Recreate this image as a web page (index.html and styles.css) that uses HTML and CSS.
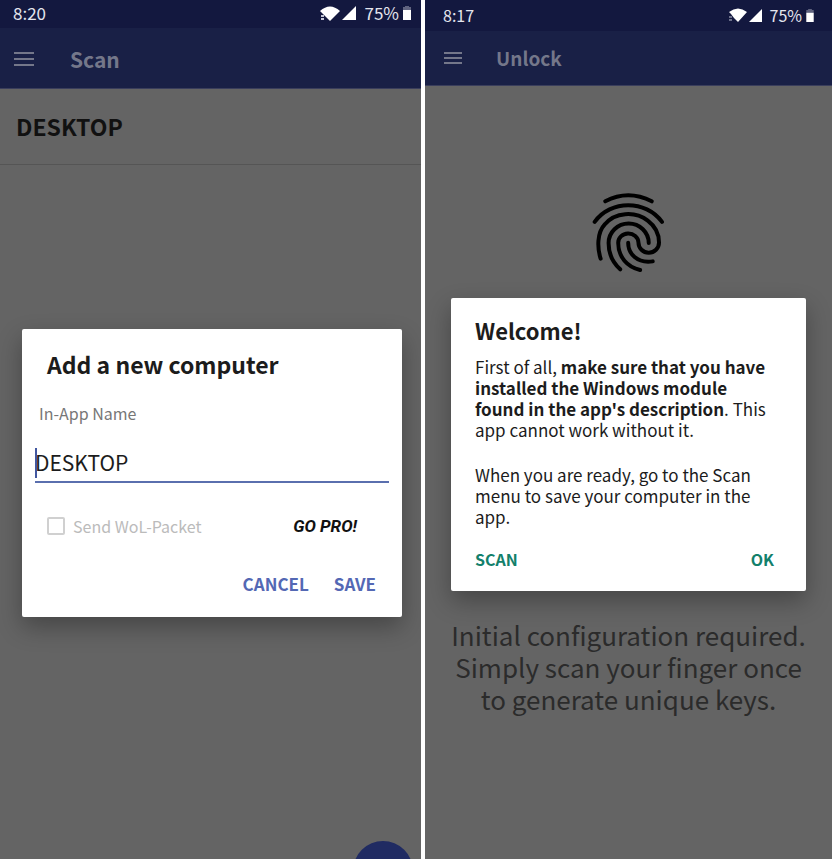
FILE: index.html
```html
<!DOCTYPE html>
<html lang="en">
<head>
  <meta charset="utf-8">
  <meta name="viewport" content="width=device-width, initial-scale=1.0">
  <title>Remote Fingerprint Unlock</title>
  <link rel="stylesheet" href="styles.css">
</head>
<body>
  <div class="screens">

    <!-- Scan screen -->
    <section class="phone phone-scan">
      <div class="status-bar">
        <span class="clock">8:20</span>
        <svg class="wifi" viewBox="0 0 20 15" width="20" height="15">
          <path d="M0 5Q10 -4 20 5L10 15L5 10L2 7Z" fill="#fff"/>
          <path d="M1 10h3M1 13h3" stroke="#c4c6d6" stroke-width="2"/>
        </svg>
        <svg class="signal" viewBox="0 0 14 14" width="14" height="14"><path d="M14 0V14H0Z" fill="#fff"/></svg>
        <span class="percent">75%</span>
        <svg class="battery" viewBox="0 0 8 14" width="8" height="14">
          <path d="M2 0H6V1H8V4H0V1H2Z" fill="#60637f"/>
          <path d="M0 4H8V14H0Z" fill="#fff"/>
        </svg>
      </div>
      <header class="app-bar">
        <button class="menu-button" aria-label="Menu">
          <svg viewBox="0 0 20 14" width="20" height="14"><path d="M0 1H20M0 7H20M0 13H20" stroke="currentColor" stroke-width="2"/></svg>
        </button>
        <h1>Scan</h1>
      </header>
      <div class="computer">DESKTOP</div>
      <button class="fab" aria-label="Add"></button>

      <div class="overlay">
        <form class="dialog add-dialog">
          <h2>Add a new computer</h2>
          <label class="name-label" for="name">In-App Name</label>
          <div class="name-field">
            <input type="text" id="name" value="DESKTOP">
            <span class="caret"></span>
          </div>
          <div class="options">
            <input type="checkbox" id="wol" disabled>
            <label for="wol">Send WoL-Packet</label>
            <button type="button" class="go-pro">GO PRO!</button>
          </div>
          <div class="actions">
            <button type="button">CANCEL</button>
            <button type="button">SAVE</button>
          </div>
        </form>
      </div>
    </section>

    <!-- Unlock screen -->
    <section class="phone phone-unlock">
      <div class="status-bar">
        <span class="clock">8:17</span>
        <svg class="wifi" viewBox="0 0 18 14" width="18" height="14">
          <path d="M0 4Q9 -3 18 4L9 14L5 10L2 6Z" fill="#fff"/>
          <path d="M0 9h3M0 12h3" stroke="#c4c6d6" stroke-width="1"/>
        </svg>
        <svg class="signal" viewBox="0 0 14 14" width="13" height="13"><path d="M14 0V14H0Z" fill="#fff"/></svg>
        <span class="percent">75%</span>
        <svg class="battery" viewBox="0 0 8 14" width="8" height="13">
          <path d="M2 0H6V1H8V4H0V1H2Z" fill="#60637f"/>
          <path d="M0 4H8V14H0Z" fill="#fff"/>
        </svg>
      </div>
      <header class="app-bar">
        <button class="menu-button" aria-label="Menu">
          <svg viewBox="0 0 18 12" width="18" height="12"><path d="M0 1H18M0 6H18M0 11H18" stroke="currentColor" stroke-width="2"/></svg>
        </button>
        <h1>Unlock</h1>
      </header>
      <main class="unlock">
        <svg class="fingerprint" viewBox="36 36 220 244" width="73" height="81" fill="none" stroke="#000" stroke-width="12" stroke-linecap="round">
          <path d="M76 64Q145 28 216 64"/>
          <path d="M44 126C92 59 198 59 247 126"/>
          <path d="M62 237C52 205 50 160 75 133C105 97 165 92 204 122C228 140 238 165 238 188A31 31 0 0 1 176 188A30.500 28 0 0 0 115 190C115 232 143 262 181 271"/>
          <path d="M121 269C98 248 86 220 86 190A60.500 59 0 0 1 207 190"/>
          <path d="M145 189C145 222 172 252 219 245"/>
        </svg>
        <p>Initial configuration required.<br>Simply scan your finger once<br>to generate unique keys.</p>
      </main>

      <div class="overlay">
        <div class="dialog welcome-dialog">
          <h2>Welcome!</h2>
          <p>First of all, <b>make sure that you have<br>installed the Windows module<br>found in the app's description</b>. This<br>app cannot work without it.</p>
          <p>When you are ready, go to the Scan<br>menu to save your computer in the<br>app.</p>
          <div class="actions">
            <button type="button">SCAN</button>
            <button type="button">OK</button>
          </div>
        </div>
      </div>
    </section>

  </div>
</body>
</html>
```
FILE: styles.css
```css
* {
  box-sizing: border-box;
}

body {
  margin: 0;
  background-color: #fff;
  font-family: "Noto Sans CJK SC", "Noto Sans", sans-serif;
}

h1, h2, p {
  margin: 0;
}

button {
  padding: 0;
  border: none;
  background: none;
  font-family: inherit;
  cursor: pointer;
}

svg {
  display: block;
}

.screens {
  display: grid;
  grid-template-columns: 421fr 407fr;
  gap: 4px;
  height: 100vh;
}

.phone {
  position: relative;
  overflow: hidden;
  background-color: #646464;
}

/* Status bar */
.status-bar {
  display: flex;
  align-items: center;
  height: 28px;
  padding: 0 10px 2px 13px;
  background-color: #13183f;
  color: #e4e5ee;
  font-size: 17px;
  line-height: 26px;
}

.clock {
  margin-right: auto;
}

.signal {
  margin: 0 8px 0 2px;
}

.battery {
  margin-left: 4px;
}

/* App bar */
.app-bar {
  display: flex;
  align-items: center;
  height: 61px;
  padding: 1px 14px 0;
  background-color: #192046;
  border-bottom: 1px solid #3a3e5c;
  color: #74778a;
}

.menu-button {
  color: inherit;
}

.app-bar h1 {
  margin-left: 36px;
  font-size: 21px;
  line-height: 28px;
  font-weight: 700;
}

.phone-unlock .status-bar {
  height: 31px;
  padding: 0 18px 1px;
  font-size: 16px;
}

.phone-unlock .app-bar {
  height: 55px;
  padding: 0 19px;
}

.phone-unlock .app-bar h1 {
  margin-left: 34px;
  font-size: 19px;
}

/* Scan list */
.computer {
  padding: 21px 16px 22px;
  border-bottom: 1px solid #555;
  color: #111;
  font-size: 23px;
  line-height: 32px;
  font-weight: 700;
}

.fab {
  position: absolute;
  right: 8px;
  bottom: -42px;
  width: 60px;
  height: 60px;
  border-radius: 50%;
  background-color: #202b62;
}

/* Unlock content */
.unlock {
  display: flex;
  flex-direction: column;
  align-items: center;
  padding-top: 106px;
}

.unlock p {
  margin-top: 346px;
  color: #2b2b2b;
  font-size: 26px;
  line-height: 32px;
  text-align: center;
  white-space: nowrap;
}

/* Dialogs */
.overlay {
  position: absolute;
  inset: 0;
  padding: 329px 19px 0 22px;
}

.phone-unlock .overlay {
  padding: 298px 26px 0;
}

.dialog {
  background-color: #fff;
  border-radius: 2px;
  box-shadow: 0 10px 24px rgba(0, 0, 0, 0.3);
  color: #1c1c1c;
}

.dialog h2 {
  font-weight: 700;
}

.dialog .actions button {
  font-size: 17px;
  line-height: 24px;
  font-weight: 700;
}

.add-dialog {
  padding: 19px 13px 21px;
}

.add-dialog h2 {
  padding: 0 12px;
  font-size: 23px;
  line-height: 32px;
}

.name-label {
  display: block;
  margin-top: 21px;
  padding-left: 4px;
  color: #777;
  font-size: 16px;
  line-height: 24px;
}

.name-field {
  position: relative;
  margin-top: 20px;
}

.name-field input {
  display: block;
  width: 100%;
  height: 38px;
  padding: 0 0 2px;
  border: none;
  border-bottom: 2px solid #5a6fae;
  outline: none;
  background: none;
  color: #1c1c1c;
  font-family: inherit;
  font-size: 21px;
}

.caret {
  position: absolute;
  left: 0;
  top: 3px;
  width: 2px;
  height: 30px;
  background-color: #4257a0;
}

.options {
  display: flex;
  align-items: center;
  margin-top: 31px;
  padding: 0 32px 0 12px;
  color: #bbb;
  font-size: 16px;
  line-height: 24px;
}

.options input {
  appearance: none;
  width: 18px;
  height: 18px;
  margin: 0 8px 0 0;
  border: 2px solid #d0d0d0;
  border-radius: 2px;
}

.go-pro {
  margin-left: auto;
  color: #111;
  font-family: Roboto, sans-serif;
  font-size: 17px;
  line-height: 24px;
  font-style: italic;
  font-weight: 700;
}

.add-dialog .actions {
  display: flex;
  justify-content: flex-end;
  gap: 25px;
  margin-top: 34px;
  padding-right: 13px;
}

.add-dialog .actions button {
  color: #5468b4;
}

.welcome-dialog {
  padding: 16px 24px 20px;
}

.welcome-dialog h2 {
  font-size: 22px;
  line-height: 32px;
}

.welcome-dialog p {
  margin-top: 10px;
  font-size: 17px;
  line-height: 21px;
  white-space: nowrap;
}

.welcome-dialog p + p {
  margin-top: 24px;
}

.welcome-dialog b {
  font-weight: 700;
}

.welcome-dialog .actions {
  display: flex;
  justify-content: space-between;
  margin-top: 20px;
  padding-right: 8px;
}

.welcome-dialog .actions button {
  color: #12806b;
  font-size: 16px;
}
```
